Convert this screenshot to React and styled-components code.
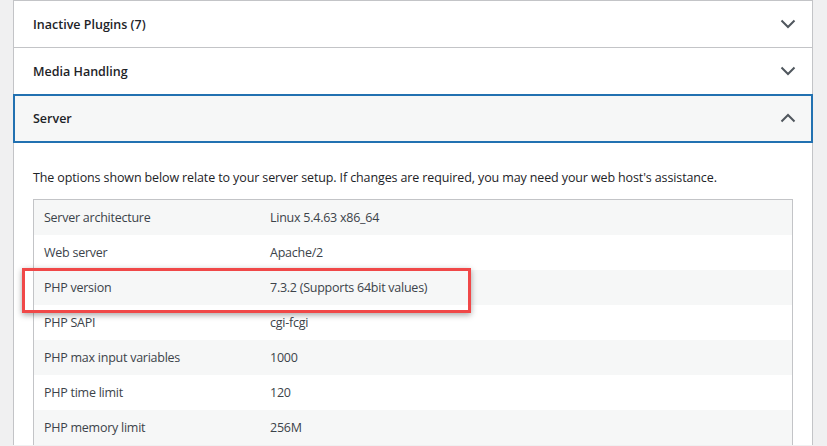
import React from "react";
import styled, { createGlobalStyle } from "styled-components";

const Global = createGlobalStyle`
  html, body { margin: 0; padding: 0; background: #f0f0f1; }
  body { font-family: "Open Sans", "Noto Sans", sans-serif; color: #1d2327; }
  * { box-sizing: border-box; }
`;

const Page = styled.div`
  padding-left: 13px;
  width: 827px;
  height: 446px;
  overflow: hidden;
`;

const Card = styled.div`
  width: 800px;
  background: #fff;
  border: 1px solid #c3c4c7;
  border-bottom: none;
`;

const Heading = styled.button`
  display: flex;
  align-items: center;
  justify-content: space-between;
  width: 100%;
  height: 47px;
  padding: 0 16px 0 19px;
  border: none;
  border-bottom: 1px solid #c3c4c7;
  background: ${(p) => (p.$open ? "#f6f7f7" : "#fff")};
  outline: ${(p) => (p.$open ? "2px solid #2271b1" : "none")};
  outline-offset: -1px;
  font-family: inherit;
  font-size: 12.5px;
  font-weight: 600;
  color: #1d2327;
  text-align: left;
  cursor: pointer;
  position: relative;
`;

const Chevron = styled.svg`
  width: 16px;
  height: 10px;
  flex: none;
`;

const Panel = styled.div`
  padding: 26px 19px 0 19px;
`;

const Intro = styled.p`
  margin: 0 0 11px;
  font-size: 12.5px;
  letter-spacing: -0.12px;
  line-height: 20px;
  color: #1d2327;
`;

const Table = styled.div`
  border: 1px solid #c3c4c7;
  border-bottom: none;
`;

const Row = styled.div`
  position: relative;
  display: grid;
  grid-template-columns: 226px 1fr;
  align-items: center;
  height: 35px;
  background: ${(p) => (p.$alt ? "#f6f7f7" : "#fff")};
  font-size: 12.5px;
  letter-spacing: -0.25px;
  color: #3c434a;
`;

const Cell = styled.div`
  padding-left: 10px;
  white-space: nowrap;
`;

const Highlight = styled.div`
  position: absolute;
  z-index: 2;
  left: -12px;
  top: -2px;
  width: 449px;
  height: 45px;
  border: 3px solid #f04848;
  box-shadow: 0 2px 6px rgba(0, 0, 0, 0.35);
  pointer-events: none;
`;

const Arrow = ({ up }) => (
  <Chevron viewBox="0 0 16 10">
    <polyline
      points={up ? "1.5,8.5 8,2 14.5,8.5" : "1.5,1.5 8,8 14.5,1.5"}
      fill="none"
      stroke="#50575e"
      strokeWidth="2"
    />
  </Chevron>
);

const rows = [
  ["Server architecture", "Linux 5.4.63 x86_64"],
  ["Web server", "Apache/2"],
  ["PHP version", "7.3.2 (Supports 64bit values)", true],
  ["PHP SAPI", "cgi-fcgi"],
  ["PHP max input variables", "1000"],
  ["PHP time limit", "120"],
  ["PHP memory limit", "256M"],
];

export default function App() {
  return (
    <>
      <Global />
      <Page>
        <Card>
          <Heading>
            <span>Inactive Plugins (7)</span>
            <Arrow />
          </Heading>
          <Heading>
            <span>Media Handling</span>
            <Arrow />
          </Heading>
          <Heading $open>
            <span>Server</span>
            <Arrow up />
          </Heading>
          <Panel>
            <Intro>
              The options shown below relate to your server setup. If changes are required, you may need your web host's assistance.
            </Intro>
            <Table>
              {rows.map(([k, v, hl], i) => (
                <Row key={k} $alt={i % 2 === 0}>
                  <Cell>{k}</Cell>
                  <Cell>{v}</Cell>
                  {hl && <Highlight />}
                </Row>
              ))}
            </Table>
          </Panel>
        </Card>
      </Page>
    </>
  );
}
